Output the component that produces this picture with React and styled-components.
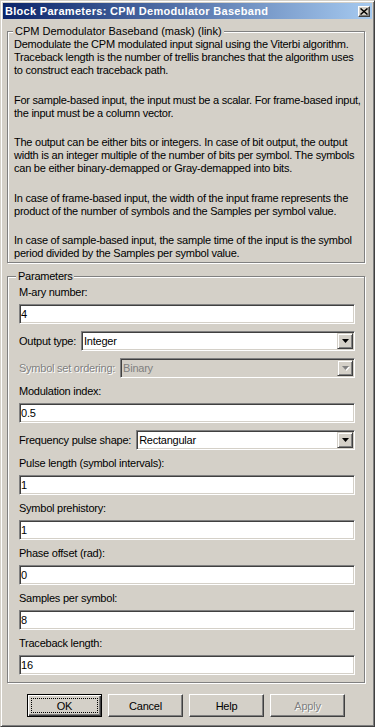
import React from "react";
import styled, { createGlobalStyle, css } from "styled-components";

const GlobalStyle = createGlobalStyle`
  html, body { margin: 0; padding: 0; background: #d4d0c8; }
  body {
    font-family: "Liberation Sans", Arial, sans-serif;
    font-size: 11px;
    letter-spacing: -0.24px;
    color: #000;
  }
  * { box-sizing: border-box; }
`;

const Window = styled.div`
  width: 375px;
  height: 727px;
  display: flex;
  flex-direction: column;
  background: #d4d0c8;
  border: 1px solid;
  border-color: #d4d0c8 #404040 #404040 #d4d0c8;
  box-shadow: inset 1px 1px #fff, inset -1px -1px #808080;
  padding: 2px;
`;

const TitleBar = styled.div`
  flex: none;
  height: 16px;
  display: flex;
  align-items: center;
  justify-content: space-between;
  padding: 0 2px;
  background: linear-gradient(to right, #0a246a, #a6caf0);
  color: #fff;
  font-weight: bold;
  font-size: 11px;
  letter-spacing: 0.3px;
  white-space: nowrap;
`;

const CloseButton = styled.div`
  width: 12px;
  height: 11px;
  display: flex;
  align-items: center;
  justify-content: center;
  background: #d4d0c8;
  border: 1px solid;
  border-color: #fff #404040 #404040 #fff;
  box-shadow: inset -1px -1px #808080;
`;

const Body = styled.div`
  flex: 1;
  display: flex;
  flex-direction: column;
  padding: 6px 7px 0 4px;
`;

const Group = styled.fieldset`
  margin: ${(p) => p.$mt}px 0 0;
  padding: 0;
  min-width: 0;
  border: 1px solid #808080;
  box-shadow: inset 1px 1px #fff, 1px 1px #fff;
`;

const Legend = styled.legend`
  margin-left: ${(p) => p.$offset}px;
  padding: 0 2px;
  line-height: 13px;
  letter-spacing: ${(p) => p.$spacing}px;
  background: #d4d0c8;
`;

const Description = styled.div`
  padding: 0 4px 2px 6px;
`;

const Para = styled.p`
  margin: 0;
  line-height: 13px;
  white-space: nowrap;
  & + & { margin-top: 16.5px; }
`;

const ParamList = styled.div`
  display: flex;
  flex-direction: column;
  gap: 7px;
  padding: 3px 9px 7px 11px;
`;

const Field = styled.div`
  display: flex;
  flex-direction: column;
  gap: 5px;
`;

const Label = styled.label`
  display: block;
  line-height: 13px;
  height: 13px;
  white-space: nowrap;
  ${(p) =>
    p.$disabled &&
    css`
      color: #808080;
      text-shadow: 1px 1px 0 #fff;
    `}
`;

const sunken = css`
  border: 1px solid;
  border-color: #808080 #fff #fff #808080;
  box-shadow: inset 1px 1px #404040, inset -1px -1px #d4d0c8;
`;

const TextBox = styled.input`
  ${sunken}
  display: block;
  width: 100%;
  height: 20px;
  margin: 0;
  padding: 0 1px;
  font: inherit;
  letter-spacing: inherit;
  color: #000;
  background: #fff;
  outline: none;
  border-radius: 0;
`;

const SelectRow = styled.div`
  display: flex;
  align-items: center;
  gap: 5px;
`;

const Select = styled.div`
  ${sunken}
  flex: 1;
  height: 20px;
  display: flex;
  align-items: center;
  padding: 1px;
  background: ${(p) => (p.$disabled ? "#d4d0c8" : "#fff")};
  color: ${(p) => (p.$disabled ? "#808080" : "#000")};
`;

const SelectValue = styled.span`
  flex: 1;
  padding-left: 1px;
  white-space: nowrap;
`;

const DropButton = styled.span`
  width: 16px;
  height: 16px;
  display: flex;
  align-items: center;
  justify-content: center;
  background: #d4d0c8;
  border: 1px solid;
  border-color: #d4d0c8 #404040 #404040 #d4d0c8;
  box-shadow: inset 1px 1px #fff, inset -1px -1px #808080;
`;

const ButtonRow = styled.div`
  display: flex;
  justify-content: center;
  gap: 6px;
  margin-top: 11px;
`;

const Button = styled.button`
  position: relative;
  width: 75px;
  height: 23px;
  margin: 0;
  padding: 0;
  font: inherit;
  letter-spacing: inherit;
  color: #000;
  background: #d4d0c8;
  border: 1px solid;
  border-color: #fff #404040 #404040 #fff;
  box-shadow: inset -1px -1px #808080;
  border-radius: 0;
  ${(p) =>
    p.$default &&
    css`
      border-color: #000;
      box-shadow: inset 1px 1px #fff, inset -1px -1px #404040,
        inset -2px -2px #808080;
      &::after {
        content: "";
        position: absolute;
        inset: 3px;
        border: 1px dotted #000;
      }
    `}
  &:disabled {
    color: #808080;
    text-shadow: 1px 1px 0 #fff;
  }
`;

const Arrow = ({ disabled }) => (
  <svg width="7" height="4" viewBox="0 0 7 4" style={{ display: "block", overflow: "visible" }}>
    {disabled && <path d="M1 1h7L4.5 5z" fill="#fff" />}
    <path d="M0 0h7L3.5 4z" fill={disabled ? "#808080" : "#000"} />
  </svg>
);

const CloseGlyph = () => (
  <svg width="8" height="7" viewBox="0 0 8 7" style={{ display: "block" }}>
    <path d="M0.5 0.5L7.5 6.5M7.5 0.5L0.5 6.5" stroke="#000" strokeWidth="1.5" />
  </svg>
);

const paragraphs = [
  [
    "Demodulate the CPM modulated input signal using the Viterbi algorithm.",
    "Traceback length is the number of trellis branches that the algorithm uses",
    "to construct each traceback path.",
  ],
  [
    "For sample-based input, the input must be a scalar. For frame-based input,",
    "the input must be a column vector.",
  ],
  [
    "The output can be either bits or integers. In case of bit output, the output",
    "width is an integer multiple of the number of bits per symbol. The symbols",
    "can be either binary-demapped or Gray-demapped into bits.",
  ],
  [
    "In case of frame-based input, the width of the input frame represents the",
    "product of the number of symbols and the Samples per symbol value.",
  ],
  [
    "In case of sample-based input, the sample time of the input is the symbol",
    "period divided by the Samples per symbol value.",
  ],
];

const params = [
  { kind: "text", label: "M-ary number:", value: "4" },
  { kind: "select", label: "Output type:", value: "Integer" },
  { kind: "select", label: "Symbol set ordering:", value: "Binary", disabled: true },
  { kind: "text", label: "Modulation index:", value: "0.5" },
  { kind: "select", label: "Frequency pulse shape:", value: "Rectangular" },
  { kind: "text", label: "Pulse length (symbol intervals):", value: "1" },
  { kind: "text", label: "Symbol prehistory:", value: "1" },
  { kind: "text", label: "Phase offset (rad):", value: "0" },
  { kind: "text", label: "Samples per symbol:", value: "8" },
  { kind: "text", label: "Traceback length:", value: "16" },
];

export default function App() {
  return (
    <>
      <GlobalStyle />
      <Window>
        <TitleBar>
          <span>Block Parameters: CPM Demodulator Baseband</span>
          <CloseButton>
            <CloseGlyph />
          </CloseButton>
        </TitleBar>
        <Body>
          <Group $mt={0}>
            <Legend $offset={5} $spacing={0}>
              CPM Demodulator Baseband (mask) (link)
            </Legend>
            <Description>
              {paragraphs.map((lines, i) => (
                <Para key={i}>
                  {lines.map((l, j) => (
                    <React.Fragment key={j}>
                      {j > 0 && <br />}
                      {l}
                    </React.Fragment>
                  ))}
                </Para>
              ))}
            </Description>
          </Group>
          <Group $mt={7}>
            <Legend $offset={8} $spacing={-0.24}>
              Parameters
            </Legend>
            <ParamList>
              {params.map((p, i) =>
                p.kind === "text" ? (
                  <Field key={i}>
                    <Label>{p.label}</Label>
                    <TextBox readOnly value={p.value} />
                  </Field>
                ) : (
                  <SelectRow key={i}>
                    <Label $disabled={p.disabled}>{p.label}</Label>
                    <Select $disabled={p.disabled}>
                      <SelectValue>{p.value}</SelectValue>
                      <DropButton>
                        <Arrow disabled={p.disabled} />
                      </DropButton>
                    </Select>
                  </SelectRow>
                )
              )}
            </ParamList>
          </Group>
          <ButtonRow>
            <Button $default>OK</Button>
            <Button>Cancel</Button>
            <Button>Help</Button>
            <Button disabled>Apply</Button>
          </ButtonRow>
        </Body>
      </Window>
    </>
  );
}
